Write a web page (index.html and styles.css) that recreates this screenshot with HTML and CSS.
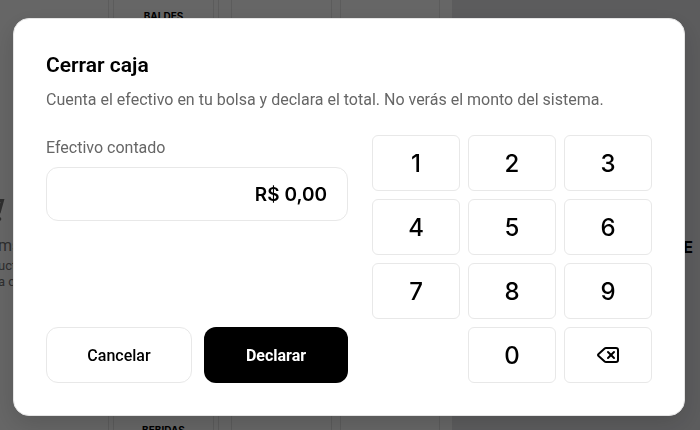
FILE: index.html
```html
<!DOCTYPE html>
<html lang="es">
<head>
  <meta charset="UTF-8">
  <meta name="viewport" content="width=device-width, initial-scale=1.0">
  <title>Cerrar caja</title>
  <link rel="stylesheet" href="styles.css">
</head>
<body>
  <!-- Point of sale, dimmed behind the dialog -->
  <div class="pos" aria-hidden="true">
    <div class="cart">
      <svg class="cartIcon" width="5" height="24" viewBox="0 0 5 24">
        <path d="M-1 2.5H2.5L-1 15" fill="none" stroke="currentColor" stroke-width="3"/>
        <circle cx="-0.5" cy="21" r="1.8" fill="currentColor"/>
      </svg>
      <p class="cartTitle">ms</p>
      <p class="cartText">uct</p>
      <p class="cartText">a c</p>
    </div>
    <div class="categories">
      <div class="category">BALDES</div>
      <div class="category">BEBIDAS</div>
    </div>
    <div class="products">
      <div class="product"></div>
      <div class="product"></div>
    </div>
    <div class="panel">E</div>
  </div>

  <div class="overlay">
    <form class="modal" role="dialog" aria-modal="true" aria-labelledby="modalTitle">
      <h2 class="modalTitle" id="modalTitle">Cerrar caja</h2>
      <p class="modalText">Cuenta el efectivo en tu bolsa y declara el total. No verás el monto del sistema.</p>

      <div class="modalBody">
        <div class="amount">
          <label class="amountLabel" for="amount">Efectivo contado</label>
          <input class="amountInput" id="amount" type="text" value="R$ 0,00" readonly>
          <div class="actions">
            <button class="button" type="button">Cancelar</button>
            <button class="button buttonPrimary" type="button">Declarar</button>
          </div>
        </div>

        <div class="keypad">
          <button class="key" type="button">1</button>
          <button class="key" type="button">2</button>
          <button class="key" type="button">3</button>
          <button class="key" type="button">4</button>
          <button class="key" type="button">5</button>
          <button class="key" type="button">6</button>
          <button class="key" type="button">7</button>
          <button class="key" type="button">8</button>
          <button class="key" type="button">9</button>
          <button class="key keyZero" type="button">0</button>
          <button class="key" type="button" aria-label="Borrar">
            <svg width="24" height="24" viewBox="0 0 24 24" fill="none" stroke="currentColor" stroke-width="2" stroke-linecap="round" stroke-linejoin="round">
              <path d="M10 5a2 2 0 0 0-1.344.519l-6.328 5.74a1 1 0 0 0 0 1.481l6.328 5.741A2 2 0 0 0 10 19h10a2 2 0 0 0 2-2V7a2 2 0 0 0-2-2z"/>
              <path d="m12 9 6 6"/>
              <path d="m18 9-6 6"/>
            </svg>
          </button>
        </div>
      </div>
    </form>
  </div>
</body>
</html>
```
FILE: styles.css
```css
* {
  box-sizing: border-box;
}
body {
  margin: 0;
  font-family: Roboto, "Liberation Sans", sans-serif;
  font-size: 16px;
  line-height: 26px;
  color: #000;
}
h2, p {
  margin: 0;
}

/* Point of sale */
.pos {
  display: flex;
  height: 100vh;
  overflow: hidden;
  background-color: #fff;
}
.cart {
  width: 109px;
  padding-top: 198px;
  border-right: 1px solid #e5e5e5;
  color: #737373;
  text-indent: -2px;
}
.cartIcon {
  display: block;
  margin-bottom: 12px;
}
.cartTitle {
  font-size: 16px;
  line-height: 24px;
}
.cartText {
  font-size: 13px;
  line-height: 16px;
}
.categories {
  display: flex;
  flex-direction: column;
  justify-content: space-between;
  width: 101px;
  margin-left: 4px;
  border: 1px solid #e5e5e5;
  border-width: 0 1px;
  font-family: Inter, sans-serif;
  font-size: 10px;
  font-weight: 700;
  line-height: 12px;
  text-align: center;
}
.category:first-child {
  padding-top: 10px;
}
.category:last-child {
  margin-bottom: -6px;
}
.products {
  display: flex;
  gap: 8px;
  width: 234px;
  margin-left: 4px;
  padding: 0 12px;
  border-left: 1px solid #e5e5e5;
}
.product {
  flex: 1;
  border: 1px solid #e5e5e5;
  border-width: 0 1px;
}
.panel {
  flex: 1;
  padding: 234px 7px 0 0;
  background-color: #e6e6e9;
  font-family: Inter, sans-serif;
  font-size: 16px;
  font-weight: 700;
  text-align: right;
}

/* Dialog */
.overlay {
  position: fixed;
  inset: 0;
  display: flex;
  align-items: center;
  justify-content: center;
  padding: 4px 15px 0 13px;
  background-color: rgba(0, 0, 0, 0.6);
}
.modal {
  width: 100%;
  max-width: 672px;
  padding: 32px;
  border: 1px solid #e5e5e5;
  border-radius: 16px;
  background-color: #fff;
  box-shadow: 0 8px 24px rgba(0, 0, 0, 0.15);
}
.modalTitle {
  font-size: 21px;
  font-weight: 600;
  line-height: 28px;
}
.modalText {
  margin-top: 8px;
  color: #666;
}
.modalBody {
  display: grid;
  grid-template-columns: 1fr 280px;
  gap: 24px;
  margin-top: 22px;
}
.amount {
  display: flex;
  flex-direction: column;
  min-width: 0;
}
.amountLabel {
  color: #666;
}
.amountInput {
  width: 100%;
  height: 54px;
  margin-top: 6px;
  padding: 0 20px;
  border: 1px solid #e8e8e8;
  border-radius: 12px;
  background-color: #fff;
  color: #000;
  font-family: Inter, sans-serif;
  font-size: 19px;
  font-weight: 600;
  text-align: right;
}
.actions {
  display: flex;
  gap: 12px;
  margin-top: auto;
}
.button {
  flex: 1;
  height: 56px;
  padding: 0 24px;
  border: 1px solid #e8e8e8;
  border-radius: 12px;
  background-color: #fff;
  color: #000;
  font-family: inherit;
  font-size: 16px;
  font-weight: 500;
}
.buttonPrimary {
  border: 0;
  background-color: #000;
  color: #fff;
  font-weight: 700;
}
.keypad {
  display: grid;
  grid-template-columns: repeat(3, 1fr);
  gap: 8px;
}
.key {
  display: flex;
  align-items: center;
  justify-content: center;
  height: 56px;
  padding: 0;
  border: 1px solid #e8e8e8;
  border-radius: 6px;
  background-color: #fff;
  color: #000;
  font-family: Inter, sans-serif;
  font-size: 24px;
  font-weight: 500;
}
.keyZero {
  grid-column: 2;
}
```
